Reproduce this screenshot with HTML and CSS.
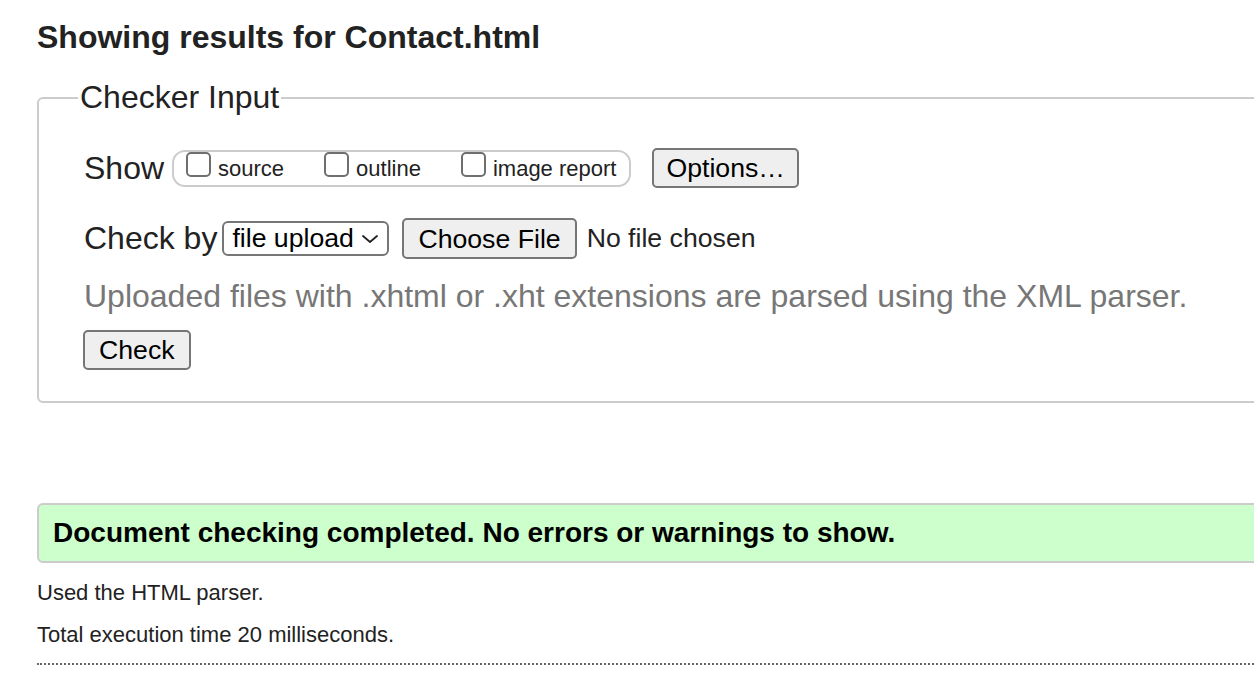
FILE: index.html
```html
<!DOCTYPE html>
<html lang="en">
<head>
<meta charset="utf-8">
<title>Showing results for Contact.html</title>
<link rel="stylesheet" href="styles.css">
</head>
<body>
<div class="page">
  <h2 class="title">Showing results for Contact.html</h2>
  <form class="checker" onsubmit="return false">
    <fieldset class="input-box">
      <legend class="input-legend">Checker Input</legend>
      <div class="row row-show">
        <span class="row-label label-show">Show</span>
        <span class="options-group">
          <label class="opt"><input type="checkbox" class="cb"><span class="opt-text">source</span></label>
          <label class="opt"><input type="checkbox" class="cb"><span class="opt-text">outline</span></label>
          <label class="opt opt-last"><input type="checkbox" class="cb"><span class="opt-text">image report</span></label>
        </span>
        <button type="button" class="btn btn-options">Options…</button>
      </div>
      <div class="row row-by">
        <label class="row-label label-by" for="docselect">Check by</label>
        <span class="select-wrap">
          <select id="docselect" class="select"><option>file upload</option></select>
          <svg class="chev" width="16" height="8" viewBox="0 0 16 8" aria-hidden="true"><path d="M1 1 L8 7 L15 1" fill="none" stroke="#222" stroke-width="1.8" stroke-linecap="round" stroke-linejoin="round"/></svg>
        </span>
        <button type="button" class="btn btn-file">Choose File</button>
        <span class="file-status">No file chosen</span>
      </div>
      <p class="hint">Uploaded files with .xhtml or .xht extensions are parsed using the XML parser.</p>
      <div class="row row-submit">
        <button type="button" class="btn btn-check">Check</button>
      </div>
    </fieldset>
  </form>
  <div class="success">
    <p class="success-text">Document checking completed. No errors or warnings to show.</p>
  </div>
  <p class="meta meta-first">Used the HTML parser.</p>
  <p class="meta">Total execution time 20 milliseconds.</p>
  <hr class="sep">
</div>
</body>
</html>
```

FILE: styles.css
```css
html, body {
  margin: 0;
  padding: 0;
  background: #fff;
}

body {
  overflow: hidden;
  font-family: "Liberation Sans", Arial, Helvetica, sans-serif;
  color: #222;
}

.page {
  padding-left: 37px;
  margin-right: -40px;
}

.title {
  margin: 19px 0 23px;
  font-size: 32px;
  line-height: 37px;
  font-weight: bold;
  color: #222;
}

.checker {
  margin: 0;
}

.input-box {
  margin: 0;
  border: 2px solid #ccc;
  border-radius: 6px;
  padding: 32px 0 31px 45px;
}

.input-legend {
  margin-left: -6px;
  padding: 0 2px;
  font-size: 32px;
  line-height: 37px;
  color: #222;
}

.row {
  display: flex;
  align-items: center;
  height: 40px;
}

.row-by {
  margin-top: 30px;
  height: 41px;
}

.row-submit {
  margin-top: 15px;
}

.row-label {
  font-size: 32px;
  line-height: 37px;
  color: #222;
}

.label-show {
  margin-right: 8px;
}

.label-by {
  margin-right: 5px;
}

.options-group {
  display: inline-flex;
  align-items: center;
  box-sizing: border-box;
  height: 37px;
  padding: 0 13px 0 12px;
  border: 2px solid #ccc;
  border-radius: 13px;
}

.opt {
  display: inline-flex;
  align-items: center;
  margin-right: 40px;
}

.opt-last {
  margin-right: 0;
}

.cb {
  appearance: none;
  -webkit-appearance: none;
  box-sizing: border-box;
  width: 25px;
  height: 25px;
  margin: 0 7px 8px 0;
  border: 2px solid #6f6f6f;
  border-radius: 5px;
  background: #fff;
}

.opt-text {
  font-size: 22px;
  line-height: 25px;
  color: #222;
}

.btn {
  box-sizing: border-box;
  height: 40px;
  padding: 0 14px;
  border: 2px solid #767676;
  border-radius: 5px;
  background: #efefef;
  color: #000;
  font-family: "Liberation Sans", Arial, Helvetica, sans-serif;
  font-size: 26.67px;
  line-height: 30px;
}

.btn-options {
  margin-left: 21px;
  padding: 0 12px;
}

.btn-file {
  height: 41px;
  margin-left: 13px;
}

.btn-check {
  margin-left: -1px;
}

.select-wrap {
  position: relative;
  display: inline-block;
  height: 35px;
}

.select {
  appearance: none;
  -webkit-appearance: none;
  box-sizing: border-box;
  width: 167px;
  height: 35px;
  margin: 0;
  padding: 0 30px 0 8px;
  border: 2px solid #767676;
  border-radius: 6px;
  background: #fff;
  color: #000;
  font-family: "Liberation Sans", Arial, Helvetica, sans-serif;
  font-size: 26.67px;
  line-height: 31px;
}

.chev {
  position: absolute;
  right: 11px;
  top: 14px;
  pointer-events: none;
}

.file-status {
  margin-left: 10px;
  font-size: 26.67px;
  line-height: 31px;
  color: #222;
}

.hint {
  margin: 19px 0 0;
  font-size: 32px;
  line-height: 37px;
  color: #777;
}

.success {
  margin-top: 100px;
  border: 2px solid #ccc;
  border-radius: 6px;
  background: #ccffcc;
  padding: 12px 14px 12px;
}

.success-text {
  margin: 0;
  font-size: 28px;
  line-height: 32px;
  font-weight: bold;
  color: #000;
}

.meta {
  margin: 17px 0 0;
  font-size: 22px;
  line-height: 25px;
  color: #222;
}

.meta-first {
  margin-top: 17px;
}

.sep {
  margin: 16px 0 0;
  height: 0;
  border: 0;
  border-top: 2px dotted #666;
}
```
